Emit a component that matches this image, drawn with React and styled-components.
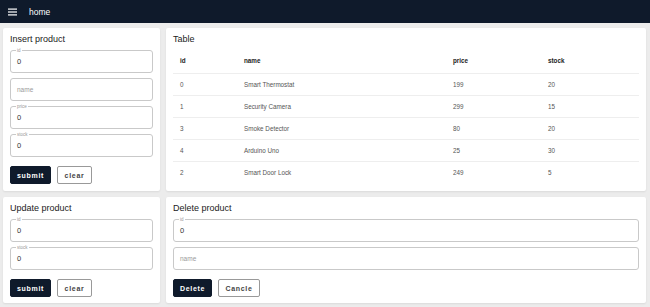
import React from "react";
import styled, { createGlobalStyle } from "styled-components";

const GlobalStyle = createGlobalStyle`
  body {
    margin: 0;
    background: #ececec;
    font-family: "Liberation Sans", Arial, sans-serif;
  }
`;

const Header = styled.header`
  height: 23px;
  background: #0f1a2b;
  display: flex;
  align-items: center;
  padding: 0 8px;
  gap: 12px;
  color: #fff;
`;

const HeaderTitle = styled.span`
  font-size: 8.5px;
`;

const Layout = styled.div`
  display: grid;
  grid-template-columns: 157px 1fr;
  grid-template-rows: 163px 106px;
  gap: 6px;
  padding: 5px 4px 4px 3px;
`;

const Card = styled.section`
  background: #fff;
  border-radius: 2px;
  box-shadow: 0 1px 2px rgba(0, 0, 0, 0.08);
  padding: 5px 7px;
  display: flex;
  flex-direction: column;
  gap: 5px;
`;

const CardTitle = styled.h2`
  margin: 0;
  font-size: 9px;
  font-weight: 400;
  color: #222;
  line-height: 12px;
`;

const Field = styled.div`
  height: 23px;
  flex: none;
  box-sizing: border-box;
  border: 1px solid #c9c9c9;
  border-radius: 3px;
  padding: 0 6px;
  position: relative;
  display: flex;
  align-items: center;
`;

const Label = styled.span`
  position: absolute;
  top: -3px;
  left: 5px;
  padding: 0 1px;
  background: #fff;
  font-size: 4.5px;
  line-height: 5px;
  color: #999;
`;

const Value = styled.span`
  font-size: ${(p) => (p.$placeholder ? "6.5px" : "7.5px")};
  color: ${(p) => (p.$placeholder ? "#9a9a9a" : "#333")};
`;

const Buttons = styled.div`
  display: flex;
  gap: 6px;
  margin-top: 4px;
`;

const Button = styled.button`
  height: 18px;
  padding: 0;
  width: ${(p) => p.w}px;
  box-sizing: border-box;
  border-radius: 2px;
  font-family: inherit;
  font-size: 7px;
  font-weight: 700;
  letter-spacing: 0.7px;
  background: ${(p) => (p.$dark ? "#0f1a2b" : "#fff")};
  color: ${(p) => (p.$dark ? "#fff" : "#444")};
  border: 1px solid ${(p) => (p.$dark ? "#0f1a2b" : "#999")};
`;

const Table = styled.table`
  border-collapse: collapse;
  width: 100%;
  margin-top: -2px;
  font-size: 6.3px;
  th {
    text-align: left;
    font-weight: 700;
    color: #222;
    height: 25px;
    padding: 0 7px;
    border-bottom: 1px solid #eee;
  }
  td {
    color: #555;
    height: 21px;
    padding: 0 7px;
    border-bottom: 1px solid #eee;
  }
  tr:last-child td {
    border-bottom: none;
  }
`;

const products = [
  { id: 0, name: "Smart Thermostat", price: 199, stock: 20 },
  { id: 1, name: "Security Camera", price: 299, stock: 15 },
  { id: 3, name: "Smoke Detector", price: 80, stock: 20 },
  { id: 4, name: "Arduino Uno", price: 25, stock: 30 },
  { id: 2, name: "Smart Door Lock", price: 249, stock: 5 },
];

function Input({ label, value, placeholder }) {
  return (
    <Field>
      {label && <Label>{label}</Label>}
      {value !== undefined ? (
        <Value>{value}</Value>
      ) : (
        <Value $placeholder>{placeholder}</Value>
      )}
    </Field>
  );
}

function MenuIcon() {
  return (
    <svg width="9" height="8" viewBox="0 0 9 8">
      <rect x="0" y="0.5" width="9" height="1.2" fill="#fff" />
      <rect x="0" y="3.4" width="9" height="1.2" fill="#fff" />
      <rect x="0" y="6.3" width="9" height="1.2" fill="#fff" />
    </svg>
  );
}

export default function App() {
  return (
    <>
      <GlobalStyle />
      <Header>
        <MenuIcon />
        <HeaderTitle>home</HeaderTitle>
      </Header>
      <Layout>
        <Card>
          <CardTitle>Insert product</CardTitle>
          <Input label="id" value="0" />
          <Input placeholder="name" />
          <Input label="price" value="0" />
          <Input label="stock" value="0" />
          <Buttons>
            <Button $dark w={41}>submit</Button>
            <Button w={35}>clear</Button>
          </Buttons>
        </Card>
        <Card>
          <CardTitle>Table</CardTitle>
          <Table>
            <colgroup>
              <col style={{ width: "64px" }} />
              <col style={{ width: "209px" }} />
              <col style={{ width: "95px" }} />
              <col />
            </colgroup>
            <thead>
              <tr>
                <th>id</th>
                <th>name</th>
                <th>price</th>
                <th>stock</th>
              </tr>
            </thead>
            <tbody>
              {products.map((p) => (
                <tr key={p.id}>
                  <td>{p.id}</td>
                  <td>{p.name}</td>
                  <td>{p.price}</td>
                  <td>{p.stock}</td>
                </tr>
              ))}
            </tbody>
          </Table>
        </Card>
        <Card>
          <CardTitle>Update product</CardTitle>
          <Input label="id" value="0" />
          <Input label="stock" value="0" />
          <Buttons>
            <Button $dark w={41}>submit</Button>
            <Button w={35}>clear</Button>
          </Buttons>
        </Card>
        <Card>
          <CardTitle>Delete product</CardTitle>
          <Input label="id" value="0" />
          <Input placeholder="name" />
          <Buttons>
            <Button $dark w={39}>Delete</Button>
            <Button w={42}>Cancle</Button>
          </Buttons>
        </Card>
      </Layout>
    </>
  );
}
